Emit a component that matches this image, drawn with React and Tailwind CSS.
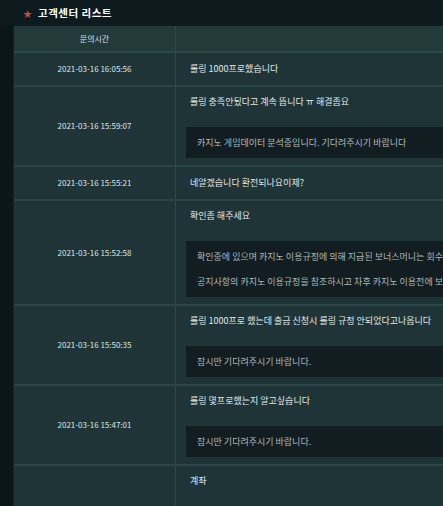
const rows = [
  { time: '2021-03-16 16:05:56', q: '롤링 1000프로했습니다' },
  {
    time: '2021-03-16 15:59:07',
    q: '롤링 충족안됬다고 계속 뜹니다 ㅠ 해결좀요',
    a: ['카지노 게임데이터 분석중입니다. 기다려주시기 바랍니다'],
  },
  { time: '2021-03-16 15:55:21', q: '네알겠습니다 환전되나요이제?' },
  {
    time: '2021-03-16 15:52:58',
    q: '확인좀 해주세요',
    a: [
      '확인중에 있으며 카지노 이용규정에 의해 지급된 보너스머니는 회수',
      '공지사항의 카지노 이용규정을 참조하시고 차후 카지노 이용전에 보',
    ],
  },
  {
    time: '2021-03-16 15:50:35',
    q: '롤링 1000프로 했는데 출금 신청시 롤링 규정 안되었다고나옵니다',
    a: ['잠시만 기다려주시기 바랍니다.'],
  },
  {
    time: '2021-03-16 15:47:01',
    q: '롤링 몇프로했는지 알고싶습니다',
    a: ['잠시만 기다려주시기 바랍니다.'],
  },
  { time: '', q: '계좌', a: ['\u00a0'] },
];

export default function App() {
  return (
    <div
      className="w-[443px] h-[506px] overflow-hidden bg-[#0b171a] text-[8px]"
      style={{ fontFamily: '"Noto Sans CJK KR", "Noto Sans", sans-serif' }}
    >
      <div className="h-[26px] flex items-center pl-[23px] bg-[#0d1b1f]">
        <span className="text-[#c9474c] text-[9px] leading-none mr-[6px]">★</span>
        <span className="text-white font-bold text-[10.5px] tracking-[0.5px]">고객센터 리스트</span>
      </div>
      <div className="flex">
        <div className="w-[14px] shrink-0 bg-[#0a1618] border-r border-[#10242a]" />
        <div className="w-[620px] shrink-0 bg-[#1f3436]">
          <div className="flex h-[27px] bg-[#223a3a] border-b-2 border-[#2c4848]">
            <div className="w-[162px] flex items-center justify-center text-[#d9e0e0] border-r border-[#2c4848]">
              문의시간
            </div>
            <div className="flex-1" />
          </div>
          {rows.map((r, i) => (
            <div key={i} className="flex border-b-2 border-[#2a4545]">
              <div className="w-[162px] shrink-0 flex items-center justify-center text-[#dfe4e4] border-r border-[#2c4848]">
                {r.time}
              </div>
              {r.a ? (
                <div className="flex-1 pb-[7px] text-[9px]">
                  <div className="h-[30px] flex items-center pl-[14px] text-[#e2e7e7]">{r.q}</div>
                  <div className="mt-[10px] ml-[10px] bg-[#111d20] py-[3px] pl-[11px] text-[#b0b9b9]">
                    {r.a.map((t, j) => (
                      <div key={j} className="leading-[25px] whitespace-nowrap">
                        {t}
                      </div>
                    ))}
                  </div>
                </div>
              ) : (
                <div className="flex-1 h-[32px] flex items-center pl-[14px] text-[9px] text-[#e2e7e7]">{r.q}</div>
              )}
            </div>
          ))}
        </div>
      </div>
    </div>
  );
}
